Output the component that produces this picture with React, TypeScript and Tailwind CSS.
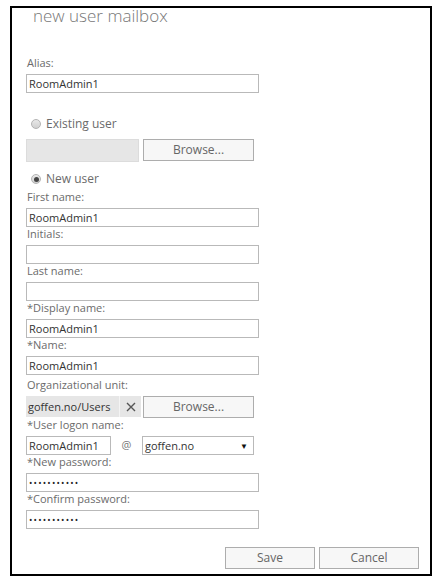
import React from "react";

const font = { fontFamily: '"Open Sans", "Noto Sans", Arial, sans-serif' };

function Label({ children }: { children: React.ReactNode }) {
  return (
    <div className="h-[18px] pl-[1px] text-[11px] leading-[14px] text-[#6b6b6b]">{children}</div>
  );
}

function Input({ value, w = "w-[233px]" }: { value?: string; w?: string }) {
  return (
    <div
      className={`${w} h-[19px] border border-[#b9b9b9] bg-white pl-[2px] text-[11px] leading-[17px] text-[#333]`}
    >
      {value}
    </div>
  );
}

function Dots() {
  return (
    <div className="w-[233px] h-[19px] border border-[#b9b9b9] bg-white pl-[2px] flex items-center">
      <span className="text-[9px] leading-[9px] tracking-[1.2px] text-[#222]">•••••••••••</span>
    </div>
  );
}

function Btn({ children, w }: { children: React.ReactNode; w: string }) {
  return (
    <div
      className={`${w} h-[22px] border border-[#adadad] bg-[#f7f7f7] flex items-center justify-center text-[12px] text-[#666]`}
    >
      {children}
    </div>
  );
}

function Radio({ checked }: { checked?: boolean }) {
  return (
    <div className="w-[10px] h-[10px] rounded-full border border-[#b3b3b3] bg-gradient-to-b from-[#e8e8e8] to-[#d0d0d0] flex items-center justify-center">
      {checked && <div className="w-[5px] h-[5px] rounded-full bg-[#444]" />}
    </div>
  );
}

export default function App() {
  return (
    <div className="w-[448px] h-[585px] bg-white pt-[6px] pl-[10px]" style={font}>
      <div className="w-[422px] h-[570px] border-2 border-black flex flex-col">
        <div className="pl-[21px] h-[18px] pt-[1px] text-[17px] leading-[14px] font-light text-[#777]">
          new user mailbox
        </div>
        <div className="pl-[14px] flex flex-col">
          <div className="mt-[30px]" />
          <Label>Alias:</Label>
          <Input value="RoomAdmin1" />
          <div className="mt-[23px] h-[16px] flex items-center gap-[5px] pl-[5px] text-[12px] text-[#6b6b6b]">
            <Radio />
            <span>Existing user</span>
          </div>
          <div className="mt-[7px] flex gap-[4px]">
            <div className="w-[113px] h-[23px] border border-[#dcdcdc] bg-[#e6e6e6]" />
            <Btn w="w-[111px]">Browse...</Btn>
          </div>
          <div className="mt-[9px] h-[16px] flex items-center gap-[5px] pl-[5px] text-[12px] text-[#6b6b6b]">
            <Radio checked />
            <span>New user</span>
          </div>
          <div className="mt-[3px]" />
          <Label>First name:</Label>
          <Input value="RoomAdmin1" />
          <Label>Initials:</Label>
          <Input />
          <Label>Last name:</Label>
          <Input />
          <Label>*Display name:</Label>
          <Input value="RoomAdmin1" />
          <Label>*Name:</Label>
          <Input value="RoomAdmin1" />
          <div className="h-[3px]" />
          <Label>Organizational unit:</Label>
          <div className="flex gap-[2px]">
            <div className="w-[115px] h-[21px] bg-[#e6e6e6] flex items-center text-[11px] text-[#333]">
              <span className="flex-1 pl-[2px] pt-[2px]">goffen.no/Users</span>
              <span className="w-[22px] h-full border-l border-[#f4f4f4] flex items-center justify-center text-[#555]">
                <svg width="10" height="10" viewBox="0 0 10 10">
                  <path d="M1 1 L9 9 M9 1 L1 9" stroke="#555" strokeWidth="1.4" />
                </svg>
              </span>
            </div>
            <Btn w="w-[111px]">Browse...</Btn>
          </div>
          <Label>*User logon name:</Label>
          <div className="flex items-center">
            <Input value="RoomAdmin1" w="w-[85px]" />
            <span className="w-[31px] text-center text-[11px] text-[#777]">@</span>
            <div className="w-[112px] h-[19px] border border-[#b9b9b9] bg-white pl-[2px] text-[11px] leading-[17px] text-[#333] flex justify-between pr-[5px]">
              <span>goffen.no</span>
              <span className="text-[8px] text-[#111]">▼</span>
            </div>
          </div>
          <Label>*New password:</Label>
          <Dots />
          <Label>*Confirm password:</Label>
          <Dots />
          <div className="mt-[18px] flex gap-[4px] pl-[199px]">
            <Btn w="w-[90px]">Save</Btn>
            <Btn w="w-[100px]">Cancel</Btn>
          </div>
        </div>
      </div>
    </div>
  );
}
